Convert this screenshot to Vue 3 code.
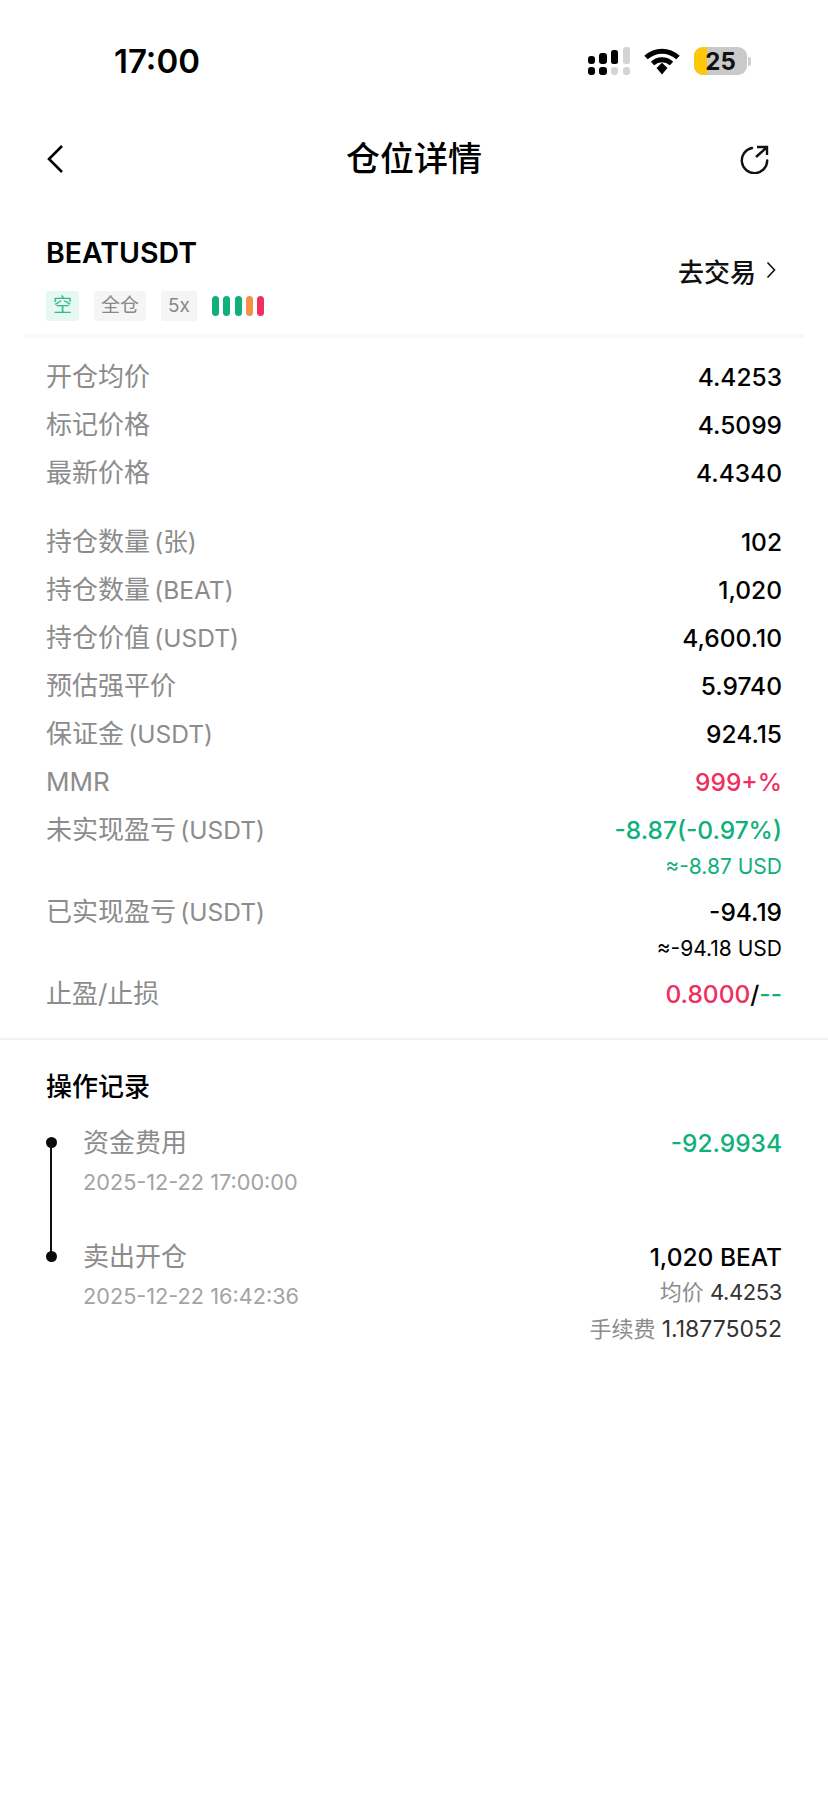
<script setup>
const priceRows = [
  { label: "开仓均价", value: "4.4253" },
  { label: "标记价格", value: "4.5099" },
  { label: "最新价格", value: "4.4340" },
]
const infoRows = [
  { label: "持仓数量", unit: "(张)", value: "102" },
  { label: "持仓数量", unit: "(BEAT)", value: "1,020" },
  { label: "持仓价值", unit: "(USDT)", value: "4,600.10" },
  { label: "预估强平价", value: "5.9740" },
  { label: "保证金", unit: "(USDT)", value: "924.15" },
  { label: "MMR", value: "999+%", cls: "red" },
  { label: "未实现盈亏", unit: "(USDT)", value: "-8.87(-0.97%)", sub: "≈-8.87 USD", cls: "green" },
  { label: "已实现盈亏", unit: "(USDT)", value: "-94.19", sub: "≈-94.18 USD" },
]
</script>

<template>
  <main class="page">
    <div class="status">
      <span class="time">17:00</span>
      <div class="status-icons">
        <svg width="42" height="28" viewBox="0 0 42 28">
          <rect x="0" y="9" width="7" height="8" rx="3" fill="#000" />
          <rect x="11" y="6" width="8" height="11" rx="3" fill="#000" />
          <rect x="23" y="3" width="7" height="14" rx="2.5" fill="#000" />
          <rect x="35" y="0" width="7" height="17" rx="2.5" fill="#d4d4d4" />
          <rect x="0" y="20" width="7" height="8" rx="3" fill="#000" />
          <rect x="11" y="20" width="8" height="8" rx="3" fill="#000" />
          <rect x="23" y="20" width="7" height="8" rx="3" fill="#d4d4d4" />
          <rect x="35" y="20" width="7" height="8" rx="3" fill="#d4d4d4" />
        </svg>
        <svg class="wifi" width="36" height="27" viewBox="0 0 36 27">
          <path d="M2 9.5C11.5 1 24.5 1 34 9.5" fill="none" stroke="#000" stroke-width="5" />
          <path d="M8.5 15.5C14 10.5 22 10.5 27.5 15.5" fill="none" stroke="#000" stroke-width="5" />
          <path d="M12.5 20L18 14.8L23.5 20L18 26.5Z" fill="#000" />
        </svg>
        <div class="battery">
          <span class="battery-fill"></span>
          <span class="battery-num">25</span>
        </div>
        <span class="battery-cap"></span>
      </div>
    </div>

    <header class="nav">
      <svg width="20" height="30" viewBox="0 0 20 30">
        <path d="M16 2L3 15L16 28" fill="none" stroke="#000" stroke-width="2.6" />
      </svg>
      <h1>仓位详情</h1>
      <svg class="nav-share" width="30" height="30" viewBox="0 0 30 30">
        <path d="M13 4A12.7 12.7 0 1 0 28.2 16.5" fill="none" stroke="#111" stroke-width="2.4" stroke-linecap="round" />
        <path d="M17 13L27.5 3.5M18 3H28V11" fill="none" stroke="#111" stroke-width="2.4" />
      </svg>
    </header>

    <section class="symbol">
      <div>
        <div class="symbol-name">BEATUSDT</div>
        <div class="tags">
          <span class="tag tag-short">空</span>
          <span class="tag">全仓</span>
          <span class="tag">5x</span>
          <span class="risk">
            <i class="bar bg"></i><i class="bar bg"></i><i class="bar bg"></i><i class="bar bo"></i><i class="bar br"></i>
          </span>
        </div>
      </div>
      <div class="trade">
        去交易
        <svg width="10" height="18" viewBox="0 0 10 18">
          <path d="M1.5 1.5L8.5 9L1.5 16.5" fill="none" stroke="#111" stroke-width="1.6" />
        </svg>
      </div>
    </section>

    <section class="group prices">
      <div v-for="row in priceRows" :key="row.label" class="row">
        <span class="label">{{ row.label }}</span>
        <span class="value">{{ row.value }}</span>
      </div>
    </section>

    <section class="group infos">
      <div v-for="row in infoRows" :key="row.label + row.unit" class="row">
        <span class="label">{{ row.label }} <span v-if="row.unit" class="unit">{{ row.unit }}</span></span>
        <div class="value-box" :class="row.cls">
          <span class="value">{{ row.value }}</span>
          <span v-if="row.sub" class="sub">{{ row.sub }}</span>
        </div>
      </div>
      <div class="row">
        <span class="label">止盈/止损</span>
        <span class="value"><span class="red">0.8000</span>/<span class="green">--</span></span>
      </div>
    </section>

    <section class="records">
      <h2>操作记录</h2>
      <div class="record">
        <div class="track">
          <span class="dot"></span>
          <span class="line"></span>
        </div>
        <div class="record-main">
          <div class="record-title">资金费用</div>
          <div class="record-time">2025-12-22 17:00:00</div>
        </div>
        <div class="record-side">
          <span class="value green">-92.9934</span>
        </div>
      </div>
      <div class="record">
        <div class="track">
          <span class="dot"></span>
        </div>
        <div class="record-main">
          <div class="record-title">卖出开仓</div>
          <div class="record-time">2025-12-22 16:42:36</div>
        </div>
        <div class="record-side">
          <span class="value">1,020 BEAT</span>
          <span class="detail detail-first">均价 <b>4.4253</b></span>
          <span class="detail">手续费 <b>1.18775052</b></span>
        </div>
      </div>
    </section>
  </main>
</template>

<style scoped>
.page {
  width: 828px;
  height: 1800px;
  background: #fff;
  color: #000;
  font-family: Inter, "Noto Sans CJK SC", sans-serif;
  overflow: hidden;
}

.status {
  padding: 41px 77px 0 114px;
  height: 40px;
  display: flex;
  justify-content: space-between;
  align-items: center;
}

.time {
  font-size: 33px;
  font-weight: 600;
  line-height: 40px;
}

.status-icons {
  display: flex;
  align-items: center;
}

.wifi {
  margin-left: 14px;
  margin-right: 14px;
}

.battery {
  position: relative;
  width: 53px;
  height: 28px;
  background: #c9c9c9;
  border-radius: 9px;
  overflow: hidden;
  display: flex;
  align-items: center;
  justify-content: center;
}

.battery-fill {
  position: absolute;
  left: 0;
  top: 0;
  bottom: 0;
  width: 13px;
  background: #ffc70a;
}

.battery-num {
  position: relative;
  font-size: 24px;
  font-weight: 700;
  color: #111;
}

.battery-cap {
  width: 3px;
  height: 9px;
  margin-left: 1px;
  background: #d0d0d0;
  border-radius: 0 2px 2px 0;
}

.nav {
  height: 60px;
  margin-top: 48px;
  padding: 0 46px;
  display: grid;
  grid-template-columns: 1fr auto 1fr;
  align-items: center;
}

.nav-share {
  justify-self: end;
  margin-right: 13px;
}

.nav h1 {
  margin: 0;
  font-size: 34px;
  font-weight: 500;
  line-height: 60px;
}

.symbol {
  margin: 46px 24px 0;
  padding: 0 22px 13px;
  border-bottom: 4px solid #f9f9f9;
  display: flex;
  justify-content: space-between;
  align-items: center;
}

.symbol-name {
  font-size: 28.5px;
  font-weight: 600;
  line-height: 36px;
}

.tags {
  margin-top: 20px;
  display: flex;
  align-items: center;
  gap: 15px;
}

.tag {
  height: 30px;
  padding: 0 7px;
  background: #f5f5f5;
  border-radius: 3px;
  color: #888;
  font-size: 19px;
  line-height: 30px;
}

.tag-short {
  background: #e5f8f1;
  color: #33b98c;
}

.risk {
  display: flex;
  gap: 4.3px;
}

.bar {
  width: 7px;
  height: 20px;
  border-radius: 4px;
}

.bg {
  background: #10b07c;
}

.bo {
  background: #f5924a;
}

.br {
  background: #f0315f;
}

.trade {
  display: flex;
  align-items: center;
  gap: 10px;
  margin-right: 6px;
  margin-bottom: 16px;
  font-size: 26px;
  font-weight: 500;
  color: #111;
}

.group {
  padding: 0 46px;
}

.prices {
  padding-top: 15px;
}

.infos {
  padding-top: 21px;
  padding-bottom: 20px;
  border-bottom: 2px solid #f2f2f2;
}

.row {
  min-height: 48px;
  display: flex;
  justify-content: space-between;
  align-items: flex-start;
}

.label {
  color: #8c8c8c;
  font-size: 26px;
  line-height: 48px;
  word-spacing: -3px;
}

.unit {
  font-size: 24.5px;
}

.value-box {
  display: flex;
  flex-direction: column;
  align-items: flex-end;
}

.value {
  font-size: 24.5px;
  font-weight: 500;
  line-height: 48px;
}

.sub {
  font-size: 21px;
  line-height: 30px;
  margin-top: -2px;
  margin-bottom: 6px;
}

.red {
  color: #ee2f5f;
}

.green {
  color: #10b07c;
}

.records {
  padding: 0 46px;
}

.records h2 {
  margin: 29px 0 16px;
  font-size: 26px;
  font-weight: 500;
  line-height: 36px;
}

.record {
  display: flex;
  min-height: 114px;
}

.track {
  position: relative;
  width: 37px;
  flex: none;
}

.dot {
  position: absolute;
  left: 0;
  top: 16px;
  width: 11px;
  height: 11px;
  border-radius: 50%;
  background: #0a0a0a;
}

.line {
  position: absolute;
  left: 4px;
  top: 20px;
  width: 2px;
  height: 114px;
  background: #111;
}

.record-main {
  flex: 1;
}

.record-title {
  color: #8c8c8c;
  font-size: 26px;
  line-height: 44px;
}

.record-time {
  margin-top: 2px;
  color: #a3a3a3;
  font-size: 21.7px;
  line-height: 30px;
}

.record-side {
  display: flex;
  flex-direction: column;
  align-items: flex-end;
}

.record-side .value {
  line-height: 44px;
}

.detail {
  color: #8c8c8c;
  font-size: 22px;
  line-height: 37px;
}

.detail-first {
  margin-top: -5px;
}

.detail b {
  color: #333;
  font-weight: 400;
  font-size: 23px;
}

.detail-first b {
  font-size: 22px;
  letter-spacing: -0.4px;
}
</style>
